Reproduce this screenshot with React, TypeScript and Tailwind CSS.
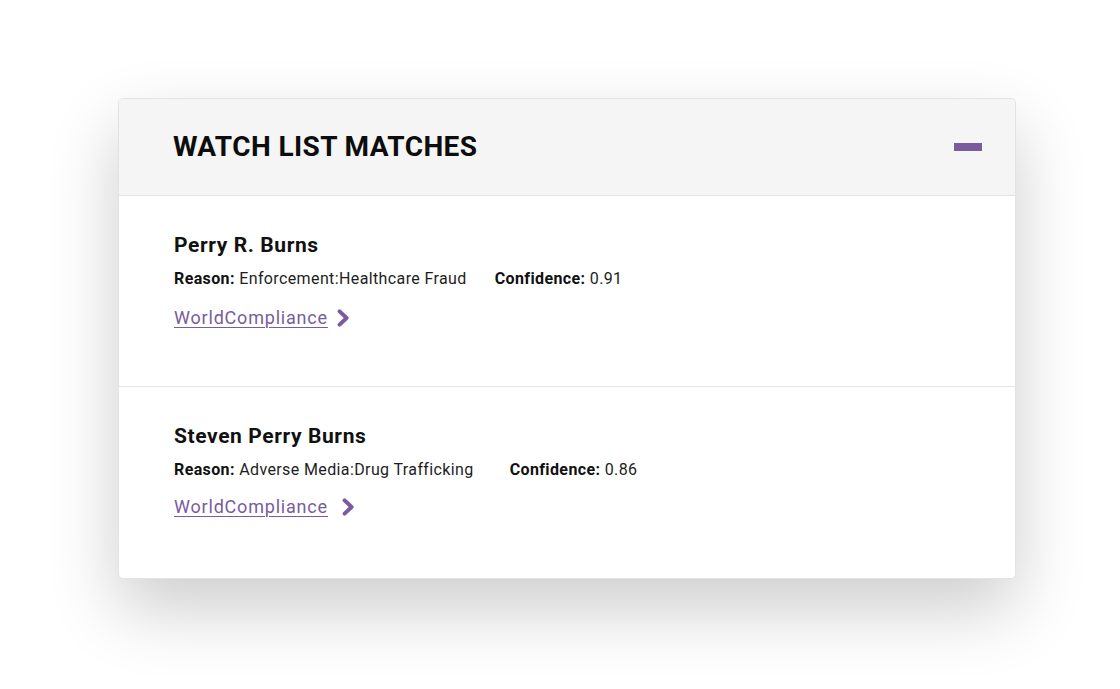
import React from "react";

const Chevron = ({ ml }: { ml: string }) => (
  <svg width="13" height="18" viewBox="0 0 13 18" className={ml}>
    <path d="M2.6 2.4 L9.6 9 L2.6 15.6" fill="none" stroke="#7a5c9c" strokeWidth="4" strokeLinecap="round" strokeLinejoin="round" />
  </svg>
);

const Match = ({ name, reason, conf, gap, linkMt, chevMl, last }: { name: string; reason: string; conf: string; gap: string; linkMt: string; chevMl: string; last?: boolean }) => (
  <div className={`flex flex-col pl-[55px] pt-[36px] h-[191px] ${last ? "" : "border-b border-[#e6e6e6]"}`}>
    <div className="text-[21px] leading-[26px] font-bold text-[#111] tracking-[0.6px]">{name}</div>
    <div className={`flex text-[16px] leading-[20px] text-[#1e1e1e] mt-[11px] tracking-[0.38px] ${gap}`}>
      <span><b className="font-bold text-[#111]">Reason:</b> {reason}</span>
      <span><b className="font-bold text-[#111]">Confidence:</b> {conf}</span>
    </div>
    <div className={`flex items-center ${linkMt}`}>
      <a className="text-[18px] leading-[24px] text-[#7a5c9c] tracking-[0.8px] underline underline-offset-[3px] decoration-1">WorldCompliance</a>
      <Chevron ml={chevMl} />
    </div>
  </div>
);

export default function App() {
  return (
    <div className="w-[1120px] h-[689px] bg-white pl-[118px] pt-[98px]" style={{ fontFamily: "Roboto, 'Liberation Sans', sans-serif" }}>
      <div className="w-[898px] rounded-[5px] border border-[#e3e3e3] bg-white overflow-hidden shadow-[0_30px_70px_rgba(0,0,0,0.2)]">
        <div className="h-[97px] bg-[#f5f5f5] border-b border-[#e3e3e3] flex items-center justify-between pl-[54px] pr-[33px]">
          <h1 className="text-[28px] leading-[32px] font-bold text-[#0d0d0d] tracking-[0.4px]">WATCH LIST MATCHES</h1>
          <div className="w-[28px] h-[8px] bg-[#7a5c9c]" />
        </div>
        <Match name="Perry R. Burns" reason="Enforcement:Healthcare Fraud" conf="0.91" gap="gap-[28px]" linkMt="mt-[17px]" chevMl="ml-[9px]" />
        <Match name="Steven Perry Burns" reason="Adverse Media:Drug Trafficking" conf="0.86" gap="gap-[36px]" linkMt="mt-[15px]" chevMl="ml-[14px]" last />
      </div>
    </div>
  );
}
